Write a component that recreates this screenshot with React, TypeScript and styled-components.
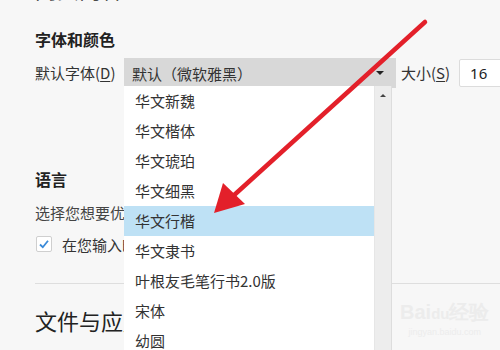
import styled, { createGlobalStyle } from 'styled-components';

const GlobalStyle = createGlobalStyle`
  html, body {
    margin: 0;
    padding: 0;
    background: #f7f7f7;
  }
  body {
    font-family: 'Noto Sans CJK SC', 'Noto Sans', sans-serif;
    color: #222;
  }
`;

const fonts = [
  '华文新魏',
  '华文楷体',
  '华文琥珀',
  '华文细黑',
  '华文行楷',
  '华文隶书',
  '叶根友毛笔行书2.0版',
  '宋体',
  '幼圆',
];

const App = (): JSX.Element => {
  return (
    <>
      <GlobalStyle />
      <Page>
        <BigHeading $top="-27px">网页内容</BigHeading>
        <SectionTitle $top="24px">字体和颜色</SectionTitle>
        <FontRow>
          <Label>
            默认字体(<u>D</u>)
          </Label>
          <Select>
            <span>默认（微软雅黑）</span>
            <Caret />
          </Select>
          <Label className="size-label">
            大小(<u>S</u>)
          </Label>
          <SizeInput>16</SizeInput>
        </FontRow>
        <SectionTitle $top="79px">语言</SectionTitle>
        <Text>选择您想要优先使用的语言</Text>
        <CheckRow>
          <CheckBox>
            <svg width="12" height="12" viewBox="0 0 12 12">
              <path
                d="M2 6.5 L4.8 9.2 L10 2.8"
                fill="none"
                stroke="#3a8ad8"
                strokeWidth="1.8"
              />
            </svg>
          </CheckBox>
          <span className="clip">在您输入时检查拼写</span>
        </CheckRow>
        <Divider />
        <BigHeading $top="21px" $clip>
          文件与应用程序
        </BigHeading>

        <Dropdown>
          <List>
            {fonts.map((name, i) => (
              <Item key={name} $active={i === 4}>
                {name}
              </Item>
            ))}
          </List>
          <ScrollBar>
            <UpArrow />
          </ScrollBar>
        </Dropdown>

        <Watermark>
          <div className="brand">
            Bai<span className="paw">du</span>经验
          </div>
          <div className="url">jingyan.baidu.com</div>
        </Watermark>

        <Annotation width="500" height="350" viewBox="0 0 500 350">
          <line
            x1="425"
            y1="22"
            x2="232"
            y2="197"
            stroke="#e3202a"
            strokeWidth="4.5"
            strokeLinecap="round"
          />
          <polygon points="214,213 223,183 245,204" fill="#e3202a" />
        </Annotation>
      </Page>
    </>
  );
};

const Page = styled.div`
  position: relative;
  width: 500px;
  height: 350px;
  overflow: hidden;
  padding-left: 35px;
  box-sizing: border-box;
  display: flex;
  flex-direction: column;
  align-items: flex-start;
`;

const BigHeading = styled.div<{ $top: string; $clip?: boolean }>`
  margin-top: ${(p) => p.$top};
  font-size: 22px;
  line-height: 30px;
  color: #222;
  white-space: nowrap;
  max-width: ${(p) => (p.$clip ? '89px' : 'none')};
  overflow: hidden;
`;

const SectionTitle = styled.div<{ $top: string }>`
  margin-top: ${(p) => p.$top};
  font-size: 16px;
  font-weight: 700;
  line-height: 24px;
  color: #222;
`;

const FontRow = styled.div`
  margin-top: 7px;
  display: flex;
  flex-direction: row;
  align-items: center;
  height: 30px;
  .size-label {
    width: auto;
    margin-left: 5px;
  }
`;

const Label = styled.div`
  width: 89px;
  font-size: 15px;
  line-height: 30px;
  color: #333;
  white-space: nowrap;
  u {
    text-underline-offset: 2px;
  }
`;

const Select = styled.div`
  width: 272px;
  height: 30px;
  box-sizing: border-box;
  background: #d8d8d8;
  padding: 0 8px 0 8px;
  display: flex;
  flex-direction: row;
  align-items: center;
  justify-content: space-between;
  font-size: 15px;
  color: #333;
`;

const Caret = styled.div`
  width: 0;
  height: 0;
  border-left: 4px solid transparent;
  border-right: 4px solid transparent;
  border-top: 4px solid #222;
  margin-right: 4px;
`;

const SizeInput = styled.div`
  margin-left: 9px;
  width: 70px;
  height: 28px;
  box-sizing: border-box;
  background: #fff;
  border: 1px solid #dcdcdc;
  border-radius: 2px;
  padding-left: 10px;
  font-size: 15px;
  line-height: 26px;
  color: #222;
  font-family: 'Noto Sans', sans-serif;
`;

const Text = styled.div`
  margin-top: 10px;
  max-width: 89px;
  overflow: hidden;
  font-size: 15px;
  line-height: 24px;
  color: #444;
  white-space: nowrap;
`;

const CheckRow = styled.div`
  margin-top: 7px;
  max-width: 89px;
  overflow: hidden;
  display: flex;
  flex-direction: row;
  align-items: center;
  gap: 10px;
  height: 24px;
  font-size: 15px;
  color: #333;
  white-space: nowrap;
  .clip {
    overflow: hidden;
  }
`;

const CheckBox = styled.div`
  width: 16px;
  height: 16px;
  flex-shrink: 0;
  box-sizing: border-box;
  margin-left: 1px;
  background: #fff;
  border: 1px solid #cfcfcf;
  border-radius: 2px;
  display: flex;
  align-items: center;
  justify-content: center;
`;

const Divider = styled.div`
  margin-top: 27px;
  align-self: stretch;
  height: 1px;
  background: #dedede;
`;

const Dropdown = styled.div`
  position: absolute;
  left: 124px;
  top: 86px;
  width: 267px;
  height: 280px;
  display: flex;
  flex-direction: row;
  background: #fff;
  border-right: 1px solid #dddddd;
`;

const List = styled.div`
  flex: 1;
  display: flex;
  flex-direction: column;
  background: #fff;
`;

const Item = styled.div<{ $active?: boolean }>`
  height: 30px;
  flex-shrink: 0;
  padding-left: 11px;
  font-size: 15px;
  line-height: 30px;
  color: #333;
  white-space: nowrap;
  background: ${(p) => (p.$active ? '#bee1f5' : 'transparent')};
`;

const ScrollBar = styled.div`
  width: 17px;
  background: #ededed;
  border-left: 1px solid #e6e6e6;
  display: flex;
  flex-direction: column;
  align-items: center;
  padding-top: 8px;
  box-sizing: border-box;
`;

const UpArrow = styled.div`
  width: 0;
  height: 0;
  border-left: 3px solid transparent;
  border-right: 3px solid transparent;
  border-bottom: 3px solid #444;
`;

const Watermark = styled.div`
  position: absolute;
  left: 400px;
  top: 300px;
  color: #ececec;
  text-align: center;
  .brand {
    font-family: 'Liberation Sans', sans-serif;
    font-size: 20px;
    font-weight: 700;
    line-height: 24px;
  }
  .paw {
    font-size: 15px;
  }
  .url {
    font-family: 'Liberation Sans', sans-serif;
    font-size: 9px;
    line-height: 12px;
  }
`;

const Annotation = styled.svg`
  position: absolute;
  left: 0;
  top: 0;
  pointer-events: none;
`;

export default App;
